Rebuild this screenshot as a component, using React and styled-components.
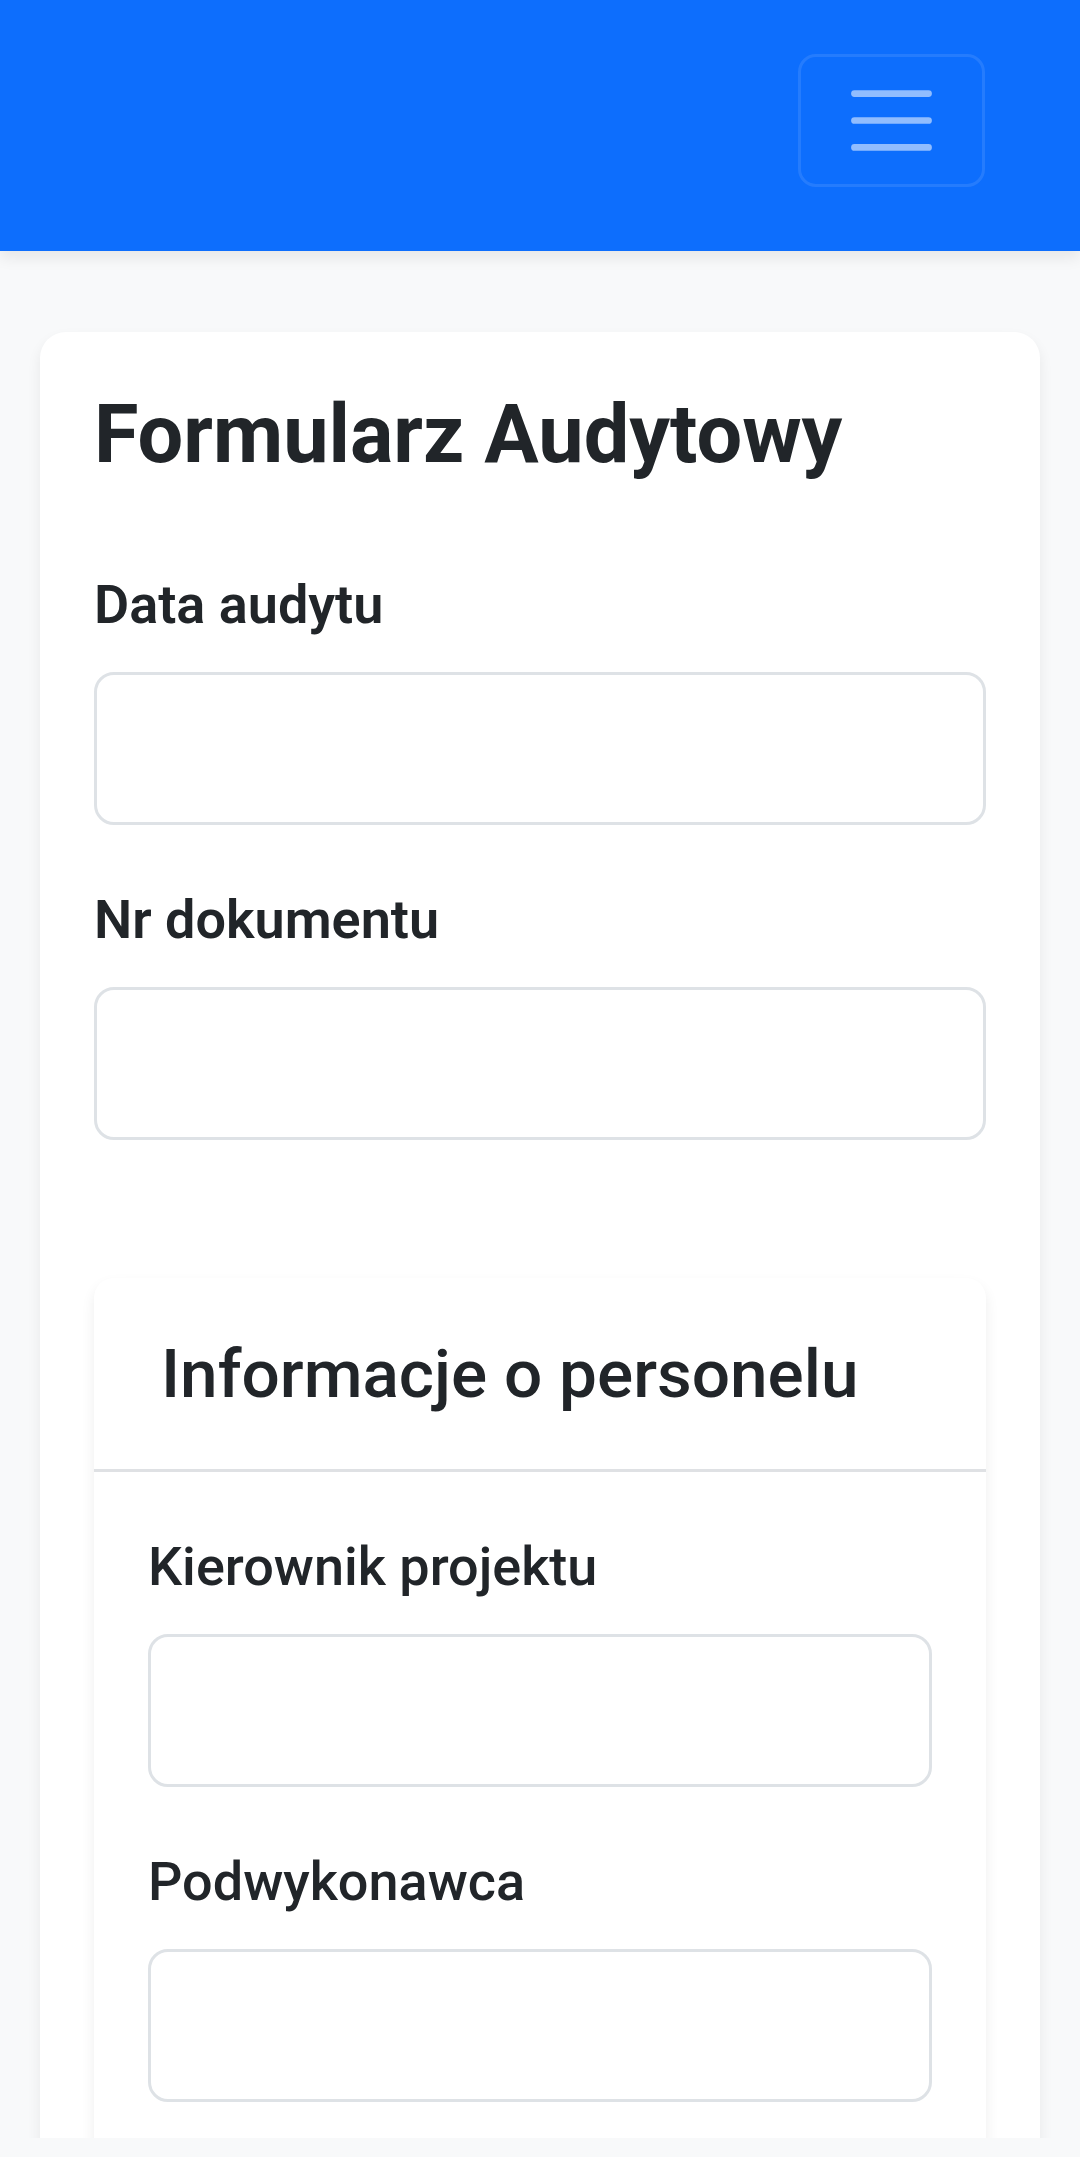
import React from 'react'
import styled, { createGlobalStyle } from 'styled-components'

const GlobalStyle = createGlobalStyle`
  * {
    box-sizing: border-box;
  }
  body {
    margin: 0;
    background-color: #f8f9fa;
    font-family: Roboto, "Noto Sans", "Liberation Sans", sans-serif;
    color: #212529;
  }
`

const Viewport = styled.div`
  height: 2138px;
  overflow: hidden;
`

const Navbar = styled.nav`
  height: 251px;
  background-color: #0d6efd;
  display: flex;
  align-items: flex-start;
  justify-content: flex-end;
  padding: 54px 95px 0 40px;
  box-shadow: 0 7px 14px rgba(0, 0, 0, 0.075);
  position: relative;
  z-index: 1;
`

const Toggler = styled.button`
  width: 187px;
  height: 133px;
  padding: 0;
  display: flex;
  align-items: center;
  justify-content: center;
  background: transparent;
  border: 3.4px solid rgba(255, 255, 255, 0.1);
  border-radius: 18px;
  cursor: pointer;
`

const Container = styled.main`
  padding: 81px 40px 0;
`

const Card = styled.section`
  background-color: #fff;
  border-radius: 26px;
  padding: 54px;
  box-shadow: 0 7px 14px rgba(0, 0, 0, 0.075);
`

const Title = styled.h2`
  margin: 0 0 81px;
  font-size: 81px;
  line-height: 97px;
  font-weight: 700;
`

const Field = styled.div`
  margin-bottom: 54px;
`

const Label = styled.label`
  display: block;
  margin-bottom: 27px;
  font-size: 54px;
  line-height: 81px;
  font-weight: ${props => (props.$strong ? 600 : 500)};
`

const Input = styled.input`
  display: block;
  width: 100%;
  height: 153px;
  padding: 0 40px;
  font: inherit;
  font-size: 54px;
  color: #212529;
  background-color: #fff;
  border: 3.4px solid #dee2e6;
  border-radius: 20px;
  outline: none;
`

const SubCard = styled.div`
  margin-top: 138px;
  background-color: #fff;
  border-radius: 20px;
  box-shadow: 0 7px 14px rgba(0, 0, 0, 0.075);
`

const SubHeader = styled.div`
  padding: 55px 54px 55px 67px;
  border-bottom: 3px solid #dfe1e4;
`

const SubTitle = styled.h5`
  margin: 0;
  font-size: 67.5px;
  line-height: 81px;
  font-weight: 500;
`

const SubBody = styled.div`
  padding: 54px;
`

const MenuIcon = () => (
  <svg width="101" height="101" viewBox="0 0 30 30" aria-hidden="true">
    <path
      d="M4 7h22M4 15h22M4 23h22"
      stroke="rgba(255, 255, 255, 0.55)"
      strokeWidth="2"
      strokeLinecap="round"
      fill="none"
    />
  </svg>
)

const outerFields = [
  { id: 'dataAudytu', label: 'Data audytu' },
  { id: 'nrDokumentu', label: 'Nr dokumentu' }
]

const personelFields = [
  { id: 'kierownik', label: 'Kierownik projektu' },
  { id: 'podwykonawca', label: 'Podwykonawca' }
]

const App = () => (
  <Viewport>
    <GlobalStyle />
    <Navbar>
      <Toggler type="button" aria-label="Toggle navigation">
        <MenuIcon />
      </Toggler>
    </Navbar>
    <Container>
      <Card>
        <Title>Formularz Audytowy</Title>
        {outerFields.map(f => (
          <Field key={f.id}>
            <Label $strong htmlFor={f.id}>{f.label}</Label>
            <Input id={f.id} type="text" />
          </Field>
        ))}
        <SubCard>
          <SubHeader>
            <SubTitle>Informacje o personelu</SubTitle>
          </SubHeader>
          <SubBody>
            {personelFields.map(f => (
              <Field key={f.id}>
                <Label htmlFor={f.id}>{f.label}</Label>
                <Input id={f.id} type="text" />
              </Field>
            ))}
          </SubBody>
        </SubCard>
      </Card>
    </Container>
  </Viewport>
)

export default App
